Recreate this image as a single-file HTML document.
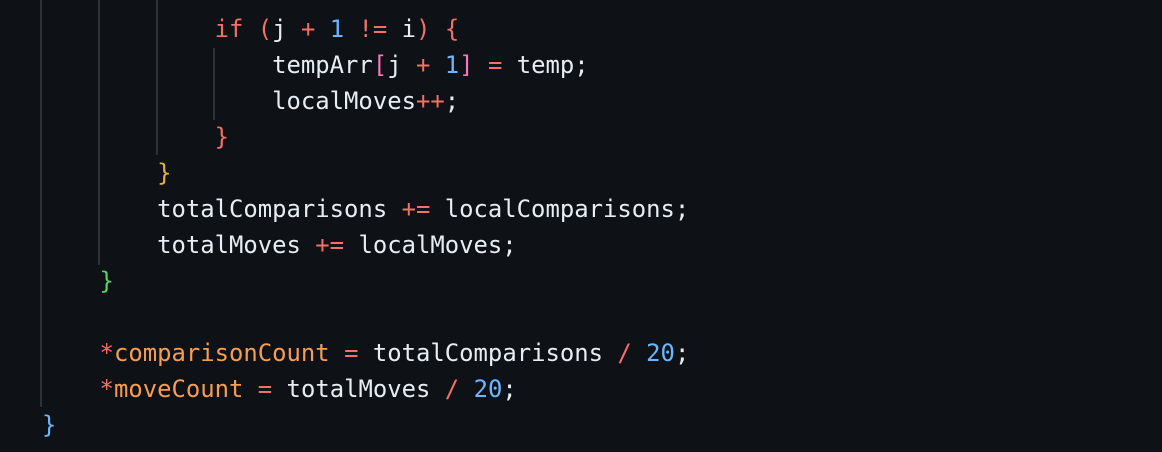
<!DOCTYPE html>
<html><head><style>
html,body{margin:0;padding:0;background:#0e1116;width:1162px;height:452px;overflow:hidden}
pre{position:absolute;left:42px;top:11px;margin:0;font-family:"DejaVu Sans Mono","Liberation Mono",monospace;font-size:23.9px;line-height:36px;color:#e6edf3;white-space:pre}
.k{color:#f47067}.n{color:#6cb6ff}.o{color:#f69d50}.p{color:#f778ba}.y{color:#e3b341}.g{color:#56d364}.b{color:#6cb6ff}
.gl{position:absolute;width:2px;background:#2d3139}
</style></head><body>
<div class="gl" style="left:40px;top:0;height:407px"></div>
<div class="gl" style="left:98px;top:0;height:265px"></div>
<div class="gl" style="left:156px;top:0;height:155px"></div>
<div class="gl" style="left:213px;top:48px;height:72px"></div>
<pre>            <span class="k">if</span> <span class="k">(</span>j <span class="k">+</span> <span class="n">1</span> <span class="k">!=</span> i<span class="k">)</span> <span class="k">{</span>
                tempArr<span class="p">[</span>j <span class="k">+</span> <span class="n">1</span><span class="p">]</span> <span class="k">=</span> temp;
                localMoves<span class="k">++</span>;
            <span class="k">}</span>
        <span class="y">}</span>
        totalComparisons <span class="k">+=</span> localComparisons;
        totalMoves <span class="k">+=</span> localMoves;
    <span class="g">}</span>

    <span class="k">*</span><span class="o">comparisonCount</span> <span class="k">=</span> totalComparisons <span class="k">/</span> <span class="n">20</span>;
    <span class="k">*</span><span class="o">moveCount</span> <span class="k">=</span> totalMoves <span class="k">/</span> <span class="n">20</span>;
<span class="b">}</span></pre>
</body></html>
